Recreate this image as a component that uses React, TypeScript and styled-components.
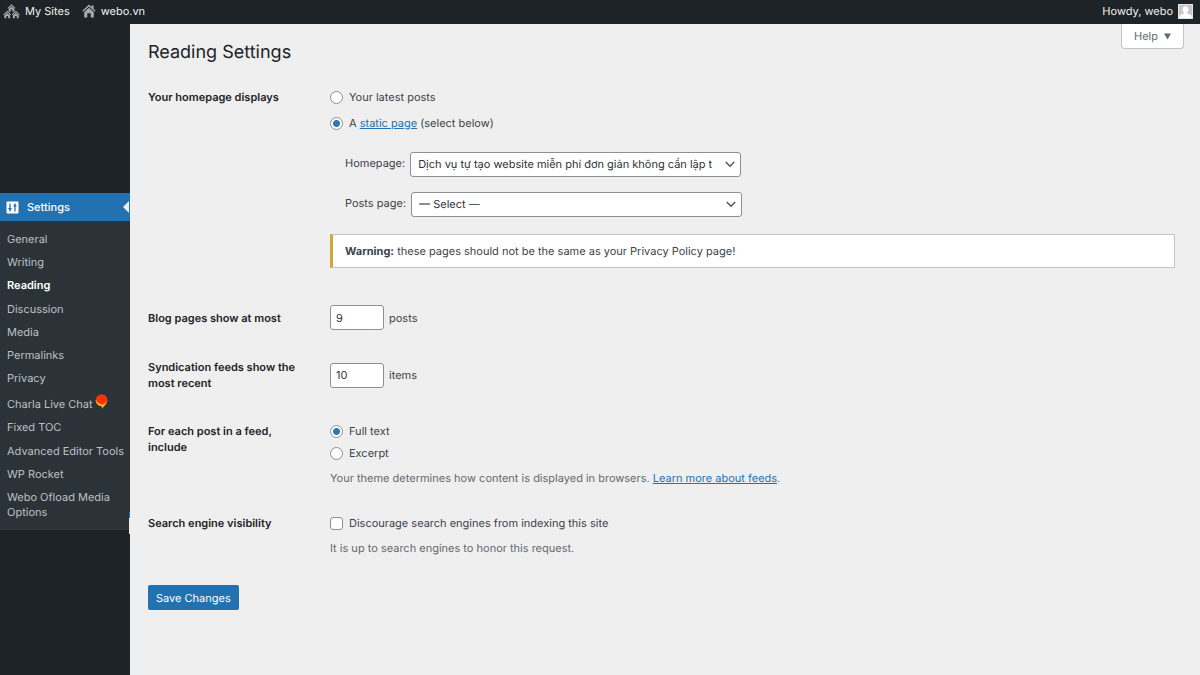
import React from "react";
import styled, { createGlobalStyle, css } from "styled-components";

const GlobalStyle = createGlobalStyle`
  *, *::before, *::after { box-sizing: border-box; }
  body {
    margin: 0;
    background: #efefef;
    color: #3c434a;
    font-family: Inter, "Noto Sans", "Liberation Sans", sans-serif;
    font-size: 11px;
    line-height: 16px;
    text-rendering: geometricPrecision;
  }
  input, select, button { font: inherit; text-rendering: inherit; }
`;

const Page = styled.div`
  display: flex;
  flex-direction: column;
  min-height: 100vh;
`;

const AdminBar = styled.header`
  display: flex;
  justify-content: space-between;
  align-items: flex-start;
  height: 24px;
  padding: 0 7px 0 3px;
  background: #1d2327;
`;

const BarGroup = styled.nav`
  display: flex;
  gap: 12px;
`;

const BarLink = styled.a`
  display: flex;
  align-items: center;
  gap: 5px;
  height: 22px;
  color: #f0f0f1;
  text-decoration: none;

  svg { flex: none; }
`;

const Columns = styled.div`
  display: flex;
  flex: 1;
`;

const Sidebar = styled.nav`
  position: relative;
  flex: none;
  width: 130px;
  padding-top: 169px;
  background: #1d2327;
`;

const CurrentMenu = styled.a`
  position: relative;
  display: flex;
  align-items: center;
  gap: 8px;
  height: 28px;
  padding-left: 6px;
  background: #2271b1;
  color: #fff;
  font-weight: 500;
  text-decoration: none;

  &::after {
    content: "";
    position: absolute;
    right: 1px;
    top: 8px;
    border: 6px solid transparent;
    border-left-width: 0;
    border-right-color: #efefef;
  }
`;

const SubMenu = styled.ul`
  display: flex;
  flex-direction: column;
  justify-content: space-between;
  min-height: 309px;
  margin: 0;
  padding: 7px 0 6px;
  background: #2c3338;
  list-style: none;
`;

const SubLink = styled.a<{ $current?: boolean }>`
  display: block;
  padding: 4px 4px 4px 7px;
  color: #bdc0c4;
  line-height: 15px;
  text-decoration: none;
  ${(p) => p.$current && css`
    color: #fff;
    font-weight: 600;
  `}

  svg {
    display: inline-block;
    margin-left: 2px;
    vertical-align: -1px;
  }
`;

const EdgeHandle = styled.span`
  position: absolute;
  right: 0;
  top: 488px;
  width: 1px;
  height: 22px;
  border-top: 6px solid #2271b1;
  background: #efefef;
`;

const Content = styled.main`
  position: relative;
  flex: 1;
  min-width: 0;
  padding: 17px 25px 40px 18px;
`;

const HelpButton = styled.button`
  position: absolute;
  top: 0;
  right: 16px;
  display: flex;
  align-items: center;
  gap: 6px;
  height: 25px;
  padding: 0 12px;
  border: 1px solid #c3c4c7;
  border-top: 0;
  border-radius: 0 0 4px 4px;
  background: #fff;
  color: #646970;
`;

const Title = styled.h1`
  margin: 0 0 21px;
  color: #1d2327;
  font-size: 18px;
  font-weight: 400;
  line-height: 24px;
`;

const Form = styled.form`
  display: flex;
  flex-direction: column;
  gap: 29px;
`;

const Row = styled.div<{ $kind?: "group" | "number" }>`
  display: grid;
  grid-template-columns: 164px minmax(0, 1fr);
  column-gap: 18px;
  align-items: ${(p) => (p.$kind === "number" ? "center" : "start")};
  padding-top: ${(p) => (p.$kind === "group" ? 3 : 0)}px;
`;

const rowTitle = css`
  color: #1d2327;
  font-weight: 600;
`;

const RowTitle = styled.div`${rowTitle}`;
const RowLabel = styled.label`${rowTitle}`;

const Choices = styled.div<{ $gap: number }>`
  display: flex;
  flex-direction: column;
  gap: ${(p) => p.$gap}px;
`;

const Choice = styled.label`
  display: flex;
  align-items: center;
  gap: 6px;
`;

const box = css`
  appearance: none;
  flex: none;
  width: 13px;
  height: 13px;
  margin: 0;
  border: 1px solid #8c8f94;
  background: #fff;
`;

const Radio = styled.input.attrs({ type: "radio" })`
  ${box}
  border-radius: 50%;
  &:checked {
    background: radial-gradient(circle, #2f78b5 3px, #fff 4px);
  }
`;

const Checkbox = styled.input.attrs({ type: "checkbox" })`
  ${box}
  border-radius: 3px;
  &:checked { background: #2271b1; }
`;

const Link = styled.a`
  color: #2271b1;
`;

const PageSelects = styled.div`
  display: flex;
  flex-direction: column;
  gap: 15px;
  margin: 21px 0 17px;
  padding-left: 15px;
`;

const SelectField = styled.label`
  display: flex;
  align-items: flex-start;
  gap: 5px;
  line-height: 23px;
`;

const SelectBox = styled.span`
  position: relative;
  width: 331px;

  svg {
    position: absolute;
    right: 6px;
    top: 9px;
    pointer-events: none;
  }
`;

const Select = styled.select`
  appearance: none;
  display: block;
  width: 100%;
  height: 25px;
  padding: 0 20px 0 7px;
  border: 1px solid #8c8f94;
  border-radius: 3px;
  background: #fff;
  color: #2c3338;
`;

const Notice = styled.p`
  margin: 0 0 8px;
  padding: 8px 12px;
  border: 1px solid #c3c4c7;
  border-left: 3px solid #d3a637;
  background: #fff;
`;

const NumberField = styled.div`
  display: flex;
  align-items: center;
  gap: 5px;
`;

const NumberInput = styled.input.attrs({ type: "number" })`
  appearance: textfield;
  width: 54px;
  height: 25px;
  padding: 0 5px;
  border: 1px solid #8c8f94;
  border-radius: 3px;
  background: #fff;
  color: #2c3338;
`;

const Description = styled.p`
  margin: 9px 0 0;
  color: #646970;
`;

const SaveButton = styled.button`
  align-self: flex-start;
  height: 25px;
  padding: 0 8px;
  border: 0;
  border-radius: 2px;
  background: #2271b1;
  color: #fff;
`;

const House = ({ x, y }: { x: number; y: number }) => (
  <g transform={`translate(${x} ${y})`}>
    <path d="M4 0 8 3.6 7.3 4.4 4 1.5 0.7 4.4 0 3.6z" />
    <path d="M4 2.3 6.9 4.8V7.4H4.9V5.2H3.1V7.4H1.1V4.8z" />
  </g>
);

const SitesIcon = () => (
  <svg width="17" height="15" viewBox="0 0 17 15" fill="#a7aaad" aria-hidden="true">
    <House x={4.5} y={0.3} />
    <House x={0.2} y={6.8} />
    <House x={8.8} y={6.8} />
  </svg>
);

const HomeIcon = () => (
  <svg width="14" height="14" viewBox="0 0 14 14" fill="#a7aaad" aria-hidden="true">
    <path d="M7 0.6 9.6 3V1.4H11.6V4.9L13.6 6.8 12.7 7.7 7 2.5 1.3 7.7 0.4 6.8z" />
    <path d="M7 3.8 11.8 8.2V13.5H8.7V9.3H5.3V13.5H2.2V8.2z" />
  </svg>
);

const Avatar = () => (
  <svg width="15" height="15" viewBox="0 0 15 15" aria-hidden="true">
    <rect width="15" height="15" fill="#e4e5e7" />
    <rect x="1" y="1" width="13" height="13" fill="#c5c7ca" />
    <path d="M7.5 2.2c2 0 3 1.4 2.9 3.2-.1 1.3-.6 2.2-1.2 2.8v1.2l3.6 1.7c.7.4 1 1.1 1 2.9H1.2c0-1.8.3-2.5 1-2.9l3.6-1.7V8.2C5.2 7.6 4.7 6.7 4.6 5.4 4.5 3.6 5.5 2.2 7.5 2.2z" fill="#fff" />
  </svg>
);

const SettingsIcon = () => (
  <svg width="13" height="13" viewBox="0 0 13 13" aria-hidden="true">
    <rect x="0.5" y="0.5" width="12" height="12" rx="1" fill="#fff" />
    <path d="M4 2.5V10.5M9 2.5V10.5" stroke="#2271b1" strokeWidth="1.3" />
    <path d="M1.9 7H6.1L4 9.6zM6.9 5.6H11.1L9 3z" fill="#2271b1" />
  </svg>
);

const BalloonIcon = () => (
  <svg width="13" height="15" viewBox="0 0 13 15" aria-hidden="true">
    <path d="M12.4 6c0 3.2-2.6 5.4-5.2 8.4L6.6 12.3C3.2 12 0.6 9.6 0.6 5.8z" fill="#fcb414" />
    <path d="M6.5 0.5c3.3 0 5.8 2.2 5.8 5 0 2.4-1.9 4.2-4.5 4.9C4.9 10.6 1.6 8.6 1 5.6 1 2.7 3.4 0.5 6.5 0.5z" fill="#fb3207" />
  </svg>
);

const Chevron = () => (
  <svg width="10" height="7" viewBox="0 0 10 7" fill="none" stroke="#50575e" strokeWidth="1.5" aria-hidden="true">
    <path d="M0.8 1 5 5.2 9.2 1" />
  </svg>
);

const HelpArrow = () => (
  <svg width="7" height="7" viewBox="0 0 7 7" fill="#646970" aria-hidden="true">
    <path d="M0 0.5H7L3.5 6.5z" />
  </svg>
);

const menuItems = [
  "General",
  "Writing",
  "Reading",
  "Discussion",
  "Media",
  "Permalinks",
  "Privacy",
  "Charla Live Chat",
  "Fixed TOC",
  "Advanced Editor Tools",
  "WP Rocket",
  "Webo Ofload Media Options",
];

const PageSelect = ({ label, option }: { label: string; option: string }) => (
  <SelectField>
    {label}
    <SelectBox>
      <Select>
        <option>{option}</option>
      </Select>
      <Chevron />
    </SelectBox>
  </SelectField>
);

export default function App() {
  return (
    <Page>
      <GlobalStyle />
      <AdminBar>
        <BarGroup aria-label="Sites">
          <BarLink href="#sites"><SitesIcon />My Sites</BarLink>
          <BarLink href="#site"><HomeIcon />webo.vn</BarLink>
        </BarGroup>
        <BarGroup aria-label="Account">
          <BarLink href="#profile">Howdy, webo<Avatar /></BarLink>
        </BarGroup>
      </AdminBar>
      <Columns>
        <Sidebar aria-label="Main menu">
          <CurrentMenu href="#settings"><SettingsIcon />Settings</CurrentMenu>
          <SubMenu>
            {menuItems.map((item) => (
              <li key={item}>
                <SubLink href="#" $current={item === "Reading"}>
                  {item}
                  {item === "Charla Live Chat" && <BalloonIcon />}
                </SubLink>
              </li>
            ))}
          </SubMenu>
          <EdgeHandle />
        </Sidebar>
        <Content>
          <HelpButton type="button">Help<HelpArrow /></HelpButton>
          <Title>Reading Settings</Title>
          <Form onSubmit={(e) => e.preventDefault()}>
            <Row $kind="group" role="radiogroup" aria-labelledby="home-title">
              <RowTitle id="home-title">Your homepage displays</RowTitle>
              <div>
                <Choices $gap={10}>
                  <Choice><Radio name="home" />Your latest posts</Choice>
                  <Choice>
                    <Radio name="home" defaultChecked />
                    <span>A <Link href="#pages">static page</Link> (select below)</span>
                  </Choice>
                </Choices>
                <PageSelects>
                  <PageSelect label="Homepage:" option="Dịch vụ tự tạo website miễn phí đơn giản không cần lập t" />
                  <PageSelect label="Posts page:" option="— Select —" />
                </PageSelects>
                <Notice><strong>Warning:</strong> these pages should not be the same as your Privacy Policy page!</Notice>
              </div>
            </Row>
            <Row $kind="number">
              <RowLabel htmlFor="posts">Blog pages show at most</RowLabel>
              <NumberField><NumberInput id="posts" defaultValue={9} />posts</NumberField>
            </Row>
            <Row $kind="number">
              <RowLabel htmlFor="items">Syndication feeds show the most recent</RowLabel>
              <NumberField><NumberInput id="items" defaultValue={10} />items</NumberField>
            </Row>
            <Row $kind="group" role="radiogroup" aria-labelledby="feed-title">
              <RowTitle id="feed-title">For each post in a feed, include</RowTitle>
              <div>
                <Choices $gap={6}>
                  <Choice><Radio name="feed" defaultChecked />Full text</Choice>
                  <Choice><Radio name="feed" />Excerpt</Choice>
                </Choices>
                <Description>
                  Your theme determines how content is displayed in browsers. <Link href="#feeds">Learn more about feeds</Link>.
                </Description>
              </div>
            </Row>
            <Row>
              <RowTitle>Search engine visibility</RowTitle>
              <div>
                <Choice><Checkbox />Discourage search engines from indexing this site</Choice>
                <Description>It is up to search engines to honor this request.</Description>
              </div>
            </Row>
            <SaveButton type="submit">Save Changes</SaveButton>
          </Form>
        </Content>
      </Columns>
    </Page>
  );
}
